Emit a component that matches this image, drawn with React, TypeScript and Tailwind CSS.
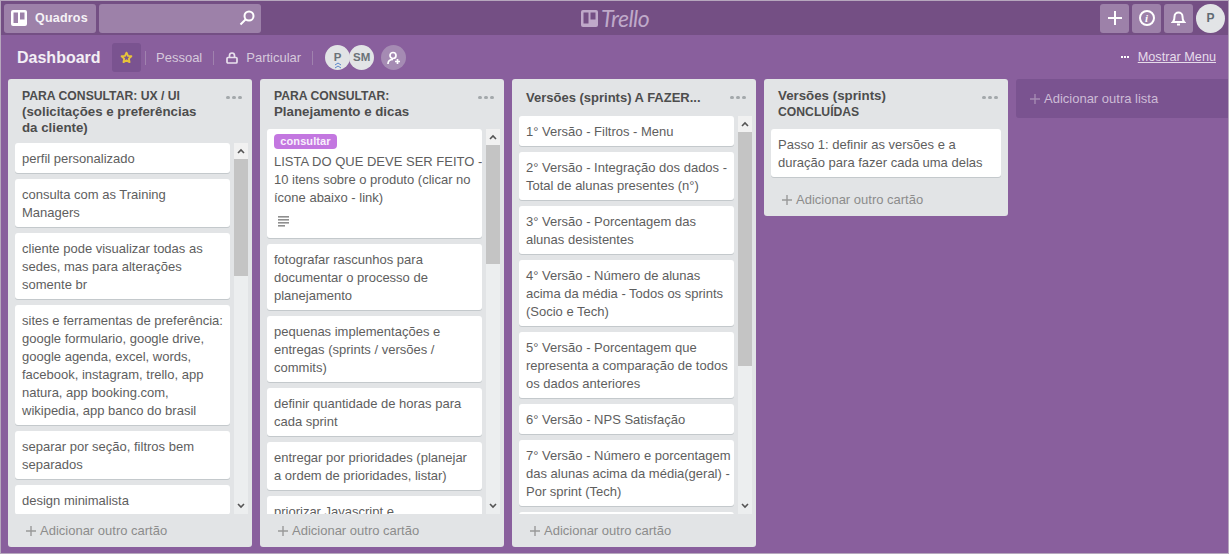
import React from "react";

type CardT = { t: string[]; label?: boolean; desc?: boolean };

const lists: { title: string[]; pb: string; cards: CardT[]; thumbH: number }[] = [
  {
    title: ["PARA CONSULTAR: UX / UI", "(solicitações e preferências", "da cliente)"],
    pb: "pb-[7px]",
    thumbH: 117,
    cards: [
      { t: ["perfil personalizado"] },
      { t: ["consulta com as Training", "Managers"] },
      { t: ["cliente pode visualizar todas as", "sedes, mas para alterações", "somente br"] },
      { t: ["sites e ferramentas de preferência:", "google formulario, google drive,", "google agenda, excel, words,", "facebook, instagram, trello, app", "natura, app booking.com,", "wikipedia, app banco do brasil"] },
      { t: ["separar por seção, filtros bem", "separados"] },
      { t: ["design minimalista"] },
    ],
  },
  {
    title: ["PARA CONSULTAR:", "Planejamento e dicas"],
    pb: "pb-[9px]",
    thumbH: 119,
    cards: [
      { t: ["LISTA DO QUE DEVE SER FEITO -", "10 itens sobre o produto (clicar no", "ícone abaixo - link)"], label: true, desc: true },
      { t: ["fotografar rascunhos para", "documentar o processo de", "planejamento"] },
      { t: ["pequenas implementações e", "entregas (sprints / versões /", "commits)"] },
      { t: ["definir quantidade de horas para", "cada sprint"] },
      { t: ["entregar por prioridades (planejar", "a ordem de prioridades, listar)"] },
      { t: ["priorizar Javascript e"] },
    ],
  },
  {
    title: ["Versões (sprints) A FAZER..."],
    pb: "pb-[8px]",
    thumbH: 234,
    cards: [
      { t: ["1° Versão - Filtros - Menu"] },
      { t: ["2° Versão - Integração dos dados -", "Total de alunas presentes (n°)"] },
      { t: ["3° Versão - Porcentagem das", "alunas desistentes"] },
      { t: ["4° Versão - Número de alunas", "acima da média - Todos os sprints", "(Socio e Tech)"] },
      { t: ["5° Versão - Porcentagem que", "representa a comparação de todos", "os dados anteriores"] },
      { t: ["6° Versão - NPS Satisfação"] },
      { t: ["7° Versão - Número e porcentagem", "das alunas acima da média(geral) -", "Por sprint (Tech)"] },
      { t: ["\u00a0"] },
    ],
  },
];

const Card = ({ c }: { c: CardT }) => (
  <div className={"shrink-0 mb-[6px] bg-white rounded-[3px] shadow-[0_1px_0_#c4c9cc] px-[7px] text-[13px] leading-[18px] text-[#5e5e5e] " + (c.label ? "pt-[5px] pb-[6px]" : "pt-[7px] pb-[5px]")}>
    {c.label && (
      <div className="w-[63px] h-[15px] mb-[4px] rounded-[4px] bg-[#c377e0] text-white/90 text-[11px] leading-[15px] font-bold text-center tracking-[0.1px]">consultar</div>
    )}
    {c.t.map((l) => (
      <div key={l} className="whitespace-nowrap">{l}</div>
    ))}
    {c.desc && (
      <div className="h-[25px] flex items-center pl-[4px] pt-[3px]">
        <svg width="11" height="11" viewBox="0 0 11 11" fill="#8f8f8f">
          <rect x="0" y="0" width="11" height="1.6" />
          <rect x="0" y="3" width="11" height="1.6" />
          <rect x="0" y="6" width="11" height="1.6" />
          <rect x="0" y="9" width="7" height="1.6" />
        </svg>
      </div>
    )}
  </div>
);

const Chevron = ({ up }: { up?: boolean }) => (
  <svg width="8" height="6" viewBox="0 0 8 6" fill="none" stroke="#555" strokeWidth="1.6">
    <path d={up ? "M1 5 L4 2 L7 5" : "M1 1 L4 4 L7 1"} />
  </svg>
);

const Scrollbar = ({ h }: { h: number }) => (
  <div className="w-[14px] shrink-0 bg-[#eceeef] flex flex-col items-center ml-[4px] mr-[4px]">
    <div className="h-[16px] w-full flex items-center justify-center bg-[#f1f1f1] shrink-0"><Chevron up /></div>
    <div className="flex-1 w-full min-h-0">
      <div className="w-full bg-[#c4c4c4]" style={{ height: h }} />
    </div>
    <div className="h-[16px] w-full flex items-center justify-center shrink-0"><Chevron /></div>
  </div>
);

const Dots = () => (
  <div className="flex gap-[2px] shrink-0 mt-[2px]">
    <span className="w-[4px] h-[3px] rounded-full bg-[#a3a8ab]" />
    <span className="w-[4px] h-[3px] rounded-full bg-[#a3a8ab]" />
    <span className="w-[4px] h-[3px] rounded-full bg-[#a3a8ab]" />
  </div>
);

const Adder = ({ label }: { label: string }) => (
  <div className="flex items-center text-[13px] leading-[18px] text-[#8c8c8c]">
    <span className="mr-[4px]">
      <svg width="10" height="10" viewBox="0 0 10 10" stroke="#999" strokeWidth="1.4"><path d="M5 0V10M0 5H10" /></svg>
    </span>
    {label}
  </div>
);

const TitleLine = ({ x, single }: { x: string; single?: boolean }) => (
  <div className={"whitespace-nowrap " + (x === x.toUpperCase() ? "text-[12.2px] " : single ? "text-[13px] " : "text-[13.3px] ") + (single ? "py-[2px]" : "")}>{x}</div>
);

const List = ({ l }: { l: (typeof lists)[number] }) => (
  <div className="w-[244px] shrink-0 h-[468px] bg-[#e2e4e6] rounded-[3px] flex flex-col">
    <div className={"flex justify-between pl-[14px] pr-[10px] pt-[9px] " + l.pb}>
      <div className="leading-[16px] font-bold text-[#4d4d4d]">
        {l.title.map((x) => <TitleLine key={x} x={x} single={l.title.length === 1} />)}
      </div>
      <div className="mt-[6px]"><Dots /></div>
    </div>
    <div className="flex-1 min-h-0 flex pl-[7px]">
      <div className="flex-1 min-w-0 overflow-hidden flex flex-col">
        {l.cards.map((c) => <Card key={c.t[0]} c={c} />)}
      </div>
      <Scrollbar h={l.thumbH} />
    </div>
    <div className="h-[33px] shrink-0 pl-[18px] flex items-center"><Adder label="Adicionar outro cartão" /></div>
  </div>
);

const TopBtn = ({ children }: { children: React.ReactNode }) => (
  <div className="w-[29px] h-[29px] rounded-[3px] bg-[#9d81a9] flex items-center justify-center">{children}</div>
);

export default function App() {
  return (
    <div className="w-[1229px] h-[554px] overflow-hidden bg-[#895f9d] flex flex-col font-['Liberation_Sans',Arial,sans-serif] border border-[#b6a7bd]">
      <header className="h-[34px] shrink-0 bg-[#744f84] flex items-center px-[3px] relative">
        <div className="h-[29px] w-[92px] rounded-[3px] bg-[#9d81a9] flex items-center pl-[7px] gap-[8px]">
          <svg width="16" height="16" viewBox="0 0 16 16">
            <rect width="16" height="16" rx="2" fill="#fff" />
            <rect x="2.5" y="2.5" width="4.5" height="10.5" fill="#9d81a9" />
            <rect x="9" y="2.5" width="4.5" height="7" fill="#9d81a9" />
          </svg>
          <span className="text-[12.5px] font-bold text-white/90 tracking-[0.2px]">Quadros</span>
        </div>
        <div className="ml-[3px] h-[29px] w-[162px] rounded-[3px] bg-[#9d81a9] flex items-center justify-end pr-[6px]">
          <svg width="16" height="16" viewBox="0 0 16 16" fill="none" stroke="#fff" strokeWidth="2"><circle cx="10" cy="6" r="4.5" /><path d="M6.5 9.5L1.5 14.5" /></svg>
        </div>
        <div className="absolute left-[580px] top-[6px] flex items-center gap-[3px] text-[#bfa9c9]">
          <svg width="17" height="17" viewBox="0 0 17 17">
            <rect width="17" height="17" rx="2" fill="#bfa9c9" />
            <rect x="2.5" y="2.5" width="5" height="11" fill="#744f84" />
            <rect x="9.5" y="2.5" width="5" height="7" fill="#744f84" />
          </svg>
          <span className="font-['Lato',sans-serif] italic font-normal text-[23px] leading-[22px] tracking-[-0.5px]">Trello</span>
        </div>
        <div className="ml-auto flex items-center gap-[3px] pr-[0px]">
          <TopBtn>
            <svg width="14" height="14" viewBox="0 0 14 14" stroke="#fff" strokeWidth="2"><path d="M7 0V14M0 7H14" /></svg>
          </TopBtn>
          <TopBtn>
            <div className="w-[16px] h-[16px] rounded-full border-2 border-white flex items-center justify-center text-white text-[11px] italic font-bold font-['Liberation_Serif',serif]">i</div>
          </TopBtn>
          <TopBtn>
            <svg width="15" height="16" viewBox="0 0 15 16" fill="none" stroke="#fff" strokeWidth="2"><path d="M2 12c1.5-1.5 1.5-3 1.5-5.5a4 4 0 018 0c0 2.500 0 4 1.500 5.500z" /><path d="M6 14.500h3" /></svg>
          </TopBtn>
          <div className="w-[29px] h-[29px] rounded-full bg-[#e2e4e6] flex items-center justify-center text-[12px] font-bold text-[#5f6b73]">P</div>
        </div>
      </header>

      <div className="h-[44px] shrink-0 flex items-center pl-[16px] pr-[12px] pt-[1px] text-[#d6c9dc] text-[13px]">
        <span className="w-[95px] text-[16px] font-bold text-white/90">Dashboard</span>
        <div className="w-[29px] h-[29px] rounded-[3px] bg-[#7a5390] flex items-center justify-center mr-[4px]">
          <svg width="13" height="13" viewBox="0 0 24 24" fill="none" stroke="#e8c33a" strokeWidth="3.5" strokeLinejoin="round"><path d="M12 3l2.700 6 6.300.7-4.700 4.300 1.300 6.500-5.600-3.300-5.600 3.300 1.300-6.500-4.700-4.300 6.300-.7z" /></svg>
        </div>
        <span className="w-px h-[14px] bg-[#a082ae] mr-[10px]" />
        <span className="mr-[11px]">Pessoal</span>
        <span className="w-px h-[14px] bg-[#a082ae] mr-[12px]" />
        <svg className="mr-[8px]" width="12" height="12" viewBox="0 0 12 12" fill="none" stroke="#e9e1ed" strokeWidth="1.700"><rect x="1" y="5.500" width="10" height="5.500" rx="1" /><path d="M3.500 5.500V3.500a2.500 2.500 0 015 0V5.500" /></svg>
        <span className="mr-[11px]">Particular</span>
        <span className="w-px h-[14px] bg-[#a082ae] mr-[12px]" />
        <div className="relative w-[25px] h-[25px] rounded-full bg-[#e2e4e6] flex items-center justify-center text-[11.500px] font-bold text-[#6b7378]">
          P
          <svg className="absolute left-[9px] top-[17px]" width="8" height="7" viewBox="0 0 8 7" fill="none" stroke="#5a86c9" strokeWidth="1"><path d="M1 3L4 1L7 3M1 6L4 4L7 6" /></svg>
        </div>
        <div className="-ml-[1px] w-[25px] h-[25px] rounded-full bg-[#e2e4e6] flex items-center justify-center text-[11.500px] font-bold text-[#6b7378]">SM</div>
        <div className="ml-[7px] w-[25px] h-[25px] rounded-full bg-[#a58bb3] flex items-center justify-center">
          <svg width="14" height="14" viewBox="0 0 14 14" fill="none" stroke="#fff" strokeWidth="1.700"><circle cx="6" cy="4.500" r="3" /><path d="M1 13c0-3 2-4.500 5-4.500M10.500 8v5M8 10.500h5" /></svg>
        </div>
        <div className="ml-auto flex items-center">
          <span className="flex gap-[1px] mr-[9px]">
            <i className="w-[2px] h-[2px] bg-white" /><i className="w-[2px] h-[2px] bg-white" /><i className="w-[2px] h-[2px] bg-white" />
          </span>
          <span className="underline text-[#e6dcea] text-[12.700px]">Mostrar Menu</span>
        </div>
      </div>

      <div className="flex-1 min-h-0 flex items-start gap-[8px] pl-[7px] overflow-hidden">
        {lists.map((l) => <List key={l.title[0]} l={l} />)}
        <div className="w-[244px] shrink-0 bg-[#e2e4e6] rounded-[3px] flex flex-col">
          <div className="flex justify-between pl-[14px] pr-[10px] pt-[9px] pb-[9px]">
            <div className="leading-[16px] font-bold text-[#4d4d4d]">
              <TitleLine x="Versões (sprints)" />
              <TitleLine x="CONCLUÍDAS" />
            </div>
            <div className="mt-[6px]"><Dots /></div>
          </div>
          <div className="px-[7px]">
            <Card c={{ t: ["Passo 1: definir as versões e a", "duração para fazer cada uma delas"] }} />
          </div>
          <div className="h-[33px] pl-[18px] pt-[1px] flex items-center"><Adder label="Adicionar outro cartão" /></div>
        </div>
        <div className="w-[300px] shrink-0 h-[39px] rounded-l-[3px] bg-[#7a5390] flex items-center pl-[14px] text-[13px] text-[#cdbcd6]">
          <svg className="mr-[4px]" width="10" height="10" viewBox="0 0 10 10" stroke="#a58bb3" strokeWidth="1.400"><path d="M5 0V10M0 5H10" /></svg>
          Adicionar outra lista
        </div>
      </div>
    </div>
  );
}
